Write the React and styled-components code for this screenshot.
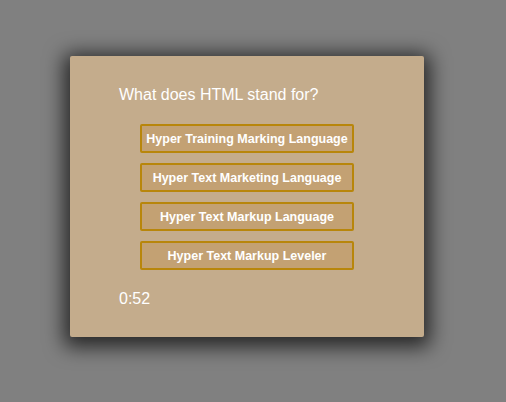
import styled, { createGlobalStyle } from "styled-components";

const Global = createGlobalStyle`
  html, body {
    margin: 0;
    padding: 0;
    background: #808080;
    font-family: "Liberation Sans", Arial, sans-serif;
  }
`;

const Page = styled.div`
  width: 506px;
  height: 402px;
  padding: 56px 0 0 70px;
  box-sizing: border-box;
`;

const Card = styled.div`
  width: 354px;
  height: 281px;
  box-sizing: border-box;
  background: #c4ac8c;
  border-radius: 2px;
  box-shadow: 0 4px 20px 6px rgba(0, 0, 0, 0.7);
  padding: 30px 0 0 49px;
  color: #fff;
`;

const Question = styled.div`
  font-size: 16px;
  line-height: 18px;
  height: 18px;
`;

const Answers = styled.div`
  display: flex;
  flex-direction: column;
  gap: 10px;
  margin: 20px 0 0 21px;
`;

const Answer = styled.button`
  width: 214px;
  height: 29px;
  box-sizing: border-box;
  background: #c3a173;
  border: 2px solid #b8860b;
  border-radius: 2px;
  color: #fff;
  font-family: "Liberation Sans", Arial, sans-serif;
  font-weight: bold;
  font-size: 12.5px;
  padding: 0;
  cursor: pointer;
`;

const Timer = styled.div`
  margin-top: 20px;
  font-size: 16px;
  line-height: 18px;
`;

const answers = [
  "Hyper Training Marking Language",
  "Hyper Text Marketing Language",
  "Hyper Text Markup Language",
  "Hyper Text Markup Leveler",
];

export default function App() {
  return (
    <Page>
      <Global />
      <Card>
        <Question>What does HTML stand for?</Question>
        <Answers>
          {answers.map((a) => (
            <Answer key={a}>{a}</Answer>
          ))}
        </Answers>
        <Timer>0:52</Timer>
      </Card>
    </Page>
  );
}
